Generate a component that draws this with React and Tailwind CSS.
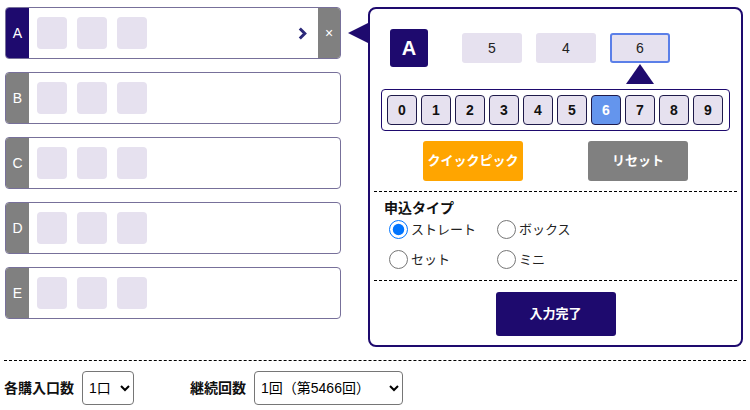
import React from 'react'

const font = "font-['Liberation_Sans','Noto_Sans_CJK_JP',sans-serif]"

const Row = ({ label, active = false }) => (
  <div className="flex h-[52px] rounded-[4px] border border-[#77709a] bg-white overflow-hidden">
    <div
      className={`w-[23px] flex items-center justify-center text-white text-[14px] ${
        active ? 'bg-[#1e0a6e]' : 'bg-[#808080]'
      }`}
    >
      {label}
    </div>
    <div className="flex-1 flex items-center gap-[10px] pl-[8px]">
      <div className="w-[30px] h-[32px] rounded-[4px] bg-[#e6e1ef]" />
      <div className="w-[30px] h-[32px] rounded-[4px] bg-[#e6e1ef]" />
      <div className="w-[30px] h-[32px] rounded-[4px] bg-[#e6e1ef]" />
    </div>
    {active && (
      <>
        <div className="flex items-center pr-[11px]">
          <svg width="9" height="13" viewBox="0 0 9 13">
            <path d="M1.8 1.5 L6.8 6.5 L1.8 11.5" fill="none" stroke="#2d2a7a" strokeWidth="3" />
          </svg>
        </div>
        <div className="w-[22px] bg-[#808080] flex items-center justify-center text-white text-[14px]">
          ×
        </div>
      </>
    )}
  </div>
)

const Radio = ({ label, checked = false }) => (
  <label className="flex items-center gap-[3px] text-[13px] text-[#222]">
    <input type="radio" name="type" defaultChecked={checked} className="w-[19px] h-[19px] m-0 accent-[#0075ff]" />
    {label}
  </label>
)

export default function App() {
  const digits = [0, 1, 2, 3, 4, 5, 6, 7, 8, 9]
  return (
    <div className={`w-[750px] h-[410px] bg-white ${font}`}>
      <div className="flex pt-[7px] pl-[5px]">
        <div className="w-[336px] flex flex-col gap-[13px]">
          <Row label="A" active />
          <Row label="B" />
          <Row label="C" />
          <Row label="D" />
          <Row label="E" />
        </div>

        <div className="relative ml-[27px] w-[375px] h-[340px] border-2 border-[#1e0a6e] rounded-[8px] bg-white">
          <div className="absolute left-[-22px] top-[14px] w-0 h-0 border-y-[10px] border-y-transparent border-r-[20px] border-r-[#1e0a6e]" />

          <div className="flex items-center pt-[20px] pl-[20px]">
            <div className="w-[38px] h-[38px] rounded-[3px] bg-[#1e0a6e] text-white font-bold text-[20px] flex items-center justify-center">
              A
            </div>
            <div className="flex gap-[14px] ml-[34px]">
              <div className="w-[60px] h-[30px] rounded-[3px] bg-[#e6e1ef] flex items-center justify-center text-[14px] text-[#222]">5</div>
              <div className="w-[60px] h-[30px] rounded-[3px] bg-[#e6e1ef] flex items-center justify-center text-[14px] text-[#222]">4</div>
              <div className="relative w-[60px] h-[30px] rounded-[3px] bg-[#e6e1ef] border-2 border-[#5b7fe8] flex items-center justify-center text-[14px] text-[#222]">
                6
                <div className="absolute left-1/2 top-full mt-[3px] -translate-x-1/2 w-0 h-0 border-x-[14px] border-x-transparent border-b-[20px] border-b-[#1e0a6e]" />
              </div>
            </div>
          </div>

          <div className="mx-[11px] mt-[22px] h-[42px] border border-[#1e0a6e] rounded-[4px] flex items-center gap-[4px] px-[5px]">
            {digits.map((d) => (
              <div
                key={d}
                className={`w-[30px] h-[30px] rounded-[4px] border border-[#1e1a4a] flex items-center justify-center font-bold text-[14px] ${
                  d === 6 ? 'bg-[#6495ed] text-white' : 'bg-[#e6e1ef] text-[#111]'
                }`}
              >
                {d}
              </div>
            ))}
          </div>

          <div className="flex justify-center gap-[65px] mt-[10px]">
            <button className="w-[100px] h-[40px] rounded-[3px] bg-[#ffa500] text-white font-bold text-[13px]">クイックピック</button>
            <button className="w-[100px] h-[40px] rounded-[3px] bg-[#808080] text-white font-bold text-[13px]">リセット</button>
          </div>

          <div className="mx-[4px] mt-[10px] border-t border-dashed border-black" />

          <div className="px-[14px] pt-[6px]">
            <div className="text-[14px] font-bold text-[#111] leading-[20px]">申込タイプ</div>
            <div className="grid grid-cols-[108px_108px] gap-y-[10px] pl-[5px] mt-[2px]">
              <Radio label="ストレート" checked />
              <Radio label="ボックス" />
              <Radio label="セット" />
              <Radio label="ミニ" />
            </div>
          </div>

          <div className="mx-[4px] mt-[11px] border-t border-dashed border-black" />

          <div className="flex justify-center mt-[11px]">
            <button className="w-[120px] h-[44px] rounded-[3px] bg-[#1e0a6e] text-white font-bold text-[13px]">入力完了</button>
          </div>
        </div>
      </div>

      <div className="mx-[4px] mt-[13px] border-t border-dashed border-black" />

      <div className="flex items-center pl-[4px] mt-[10px]">
        <span className="text-[14px] font-bold text-[#111]">各購入口数</span>
        <select className="ml-[8px] w-[52px] h-[34px] border border-[#767676] rounded-[4px] text-[14px] pl-[2px] text-black">
          <option>1口</option>
        </select>
        <span className="ml-[56px] text-[14px] font-bold text-[#111]">継続回数</span>
        <select className="ml-[8px] w-[149px] h-[34px] border border-[#767676] rounded-[4px] text-[14px] pl-[2px] text-black">
          <option>1回（第5466回）</option>
        </select>
      </div>
    </div>
  )
}
